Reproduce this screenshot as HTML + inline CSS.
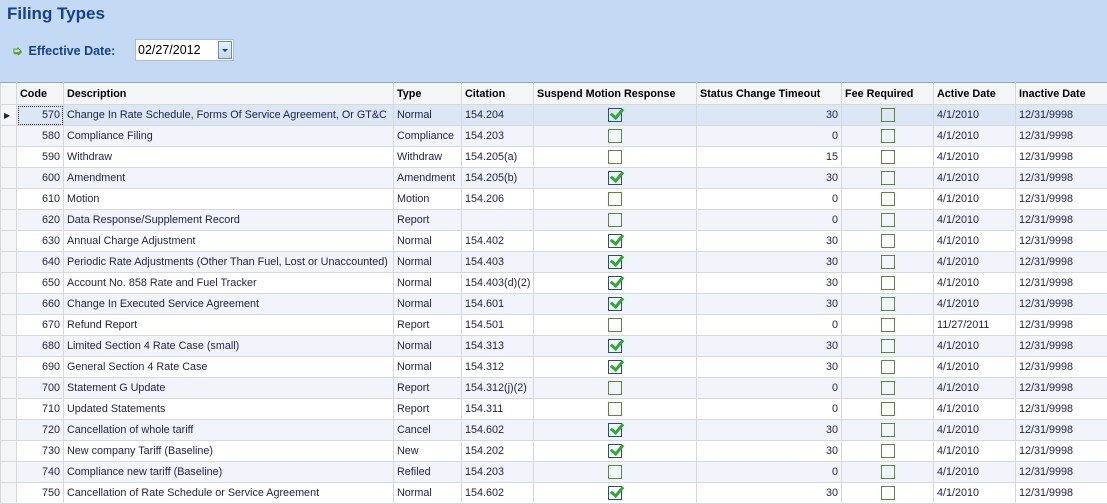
<!DOCTYPE html>
<html><head><style>
*{margin:0;padding:0;box-sizing:border-box}
body{width:1107px;height:504px;overflow:hidden;background:#c4d9f3;font-family:"Liberation Sans",sans-serif;}
.title{position:absolute;left:7px;top:4px;font-size:17px;font-weight:bold;color:#15428b;}
.lbl{position:absolute;left:12px;top:43px;font-size:12.5px;font-weight:bold;color:#15428b;}
.lbl span{color:#5a9e2a;margin-right:6px}
.date{position:absolute;left:135px;top:39px;width:99px;height:22px;background:#fff;border:1px solid #a9bfd6;font-size:12.5px;padding:3px 0 0 2px;color:#000}
.dd{position:absolute;right:1px;top:1px;width:14px;height:18px;border:1px solid #6a8cb8;background:linear-gradient(#e8f0fb,#c4d6ee)}
.dd:after{content:"";position:absolute;left:3px;top:7px;border:3px solid transparent;border-top:3px solid #15428b}
table{position:absolute;left:0;top:82px;border-collapse:collapse;table-layout:fixed;width:1107px;font-size:10.8px;color:#1f1f4f}
td,th{border:1px solid #d5d9de;height:21px;padding:0 3px;white-space:nowrap;overflow:hidden}
th{background:#f4f5f7;color:#000;text-align:left;font-weight:bold;height:22px;border-top:1px solid #9aa7b8}
tr:nth-child(odd) td{background:#f1f5fb}
tr:nth-child(even) td{background:#fff}
tr.sel td{background:#dce6f4}
td.i{background:#f4f5f7!important}
.r{text-align:right}
.c{text-align:center;line-height:0}
.cb{display:inline-block;width:14px;height:14px;border:1px solid #5b8a3c;position:relative;background:transparent}
.ck{border-color:#2b4c7e}
.ck:after{content:"";position:absolute;left:4px;top:-3px;width:5px;height:10px;border:solid #2eaa2e;border-width:0 3px 3px 0;transform:rotate(40deg)}
</style></head><body>
<div class="title">Filing Types</div>
<div class="lbl"><span>➭</span>Effective Date:</div>
<div class="date">02/27/2012<div class="dd"></div></div>
<table>
<colgroup><col style="width:16px"><col style="width:47px"><col style="width:330px"><col style="width:68px"><col style="width:72px"><col style="width:163px"><col style="width:145px"><col style="width:92px"><col style="width:82px"><col style="width:92px"></colgroup>
<tr><th></th><th>Code</th><th>Description</th><th>Type</th><th>Citation</th><th>Suspend Motion Response</th><th>Status Change Timeout</th><th>Fee Required</th><th>Active Date</th><th>Inactive Date</th></tr>
<tr class="sel"><td class="i" style="font-size:8px">▶</td><td class="r" style="outline:1px dotted #333;outline-offset:-2px">570</td><td>Change In Rate Schedule, Forms Of Service Agreement, Or GT&amp;C</td><td>Normal</td><td>154.204</td><td class="c"><span class="cb ck"></span></td><td class="r">30</td><td class="c"><span class="cb"></span></td><td>4/1/2010</td><td>12/31/9998</td></tr>
<tr><td class="i"></td><td class="r">580</td><td>Compliance Filing</td><td>Compliance</td><td>154.203</td><td class="c"><span class="cb"></span></td><td class="r">0</td><td class="c"><span class="cb"></span></td><td>4/1/2010</td><td>12/31/9998</td></tr>
<tr><td class="i"></td><td class="r">590</td><td>Withdraw</td><td>Withdraw</td><td>154.205(a)</td><td class="c"><span class="cb"></span></td><td class="r">15</td><td class="c"><span class="cb"></span></td><td>4/1/2010</td><td>12/31/9998</td></tr>
<tr><td class="i"></td><td class="r">600</td><td>Amendment</td><td>Amendment</td><td>154.205(b)</td><td class="c"><span class="cb ck"></span></td><td class="r">30</td><td class="c"><span class="cb"></span></td><td>4/1/2010</td><td>12/31/9998</td></tr>
<tr><td class="i"></td><td class="r">610</td><td>Motion</td><td>Motion</td><td>154.206</td><td class="c"><span class="cb"></span></td><td class="r">0</td><td class="c"><span class="cb"></span></td><td>4/1/2010</td><td>12/31/9998</td></tr>
<tr><td class="i"></td><td class="r">620</td><td>Data Response/Supplement Record</td><td>Report</td><td></td><td class="c"><span class="cb"></span></td><td class="r">0</td><td class="c"><span class="cb"></span></td><td>4/1/2010</td><td>12/31/9998</td></tr>
<tr><td class="i"></td><td class="r">630</td><td>Annual Charge Adjustment</td><td>Normal</td><td>154.402</td><td class="c"><span class="cb ck"></span></td><td class="r">30</td><td class="c"><span class="cb"></span></td><td>4/1/2010</td><td>12/31/9998</td></tr>
<tr><td class="i"></td><td class="r">640</td><td>Periodic Rate Adjustments (Other Than Fuel, Lost or Unaccounted)</td><td>Normal</td><td>154.403</td><td class="c"><span class="cb ck"></span></td><td class="r">30</td><td class="c"><span class="cb"></span></td><td>4/1/2010</td><td>12/31/9998</td></tr>
<tr><td class="i"></td><td class="r">650</td><td>Account No. 858 Rate and Fuel Tracker</td><td>Normal</td><td>154.403(d)(2)</td><td class="c"><span class="cb ck"></span></td><td class="r">30</td><td class="c"><span class="cb"></span></td><td>4/1/2010</td><td>12/31/9998</td></tr>
<tr><td class="i"></td><td class="r">660</td><td>Change In Executed Service Agreement</td><td>Normal</td><td>154.601</td><td class="c"><span class="cb ck"></span></td><td class="r">30</td><td class="c"><span class="cb"></span></td><td>4/1/2010</td><td>12/31/9998</td></tr>
<tr><td class="i"></td><td class="r">670</td><td>Refund Report</td><td>Report</td><td>154.501</td><td class="c"><span class="cb"></span></td><td class="r">0</td><td class="c"><span class="cb"></span></td><td>11/27/2011</td><td>12/31/9998</td></tr>
<tr><td class="i"></td><td class="r">680</td><td>Limited Section 4 Rate Case (small)</td><td>Normal</td><td>154.313</td><td class="c"><span class="cb ck"></span></td><td class="r">30</td><td class="c"><span class="cb"></span></td><td>4/1/2010</td><td>12/31/9998</td></tr>
<tr><td class="i"></td><td class="r">690</td><td>General Section 4 Rate Case</td><td>Normal</td><td>154.312</td><td class="c"><span class="cb ck"></span></td><td class="r">30</td><td class="c"><span class="cb"></span></td><td>4/1/2010</td><td>12/31/9998</td></tr>
<tr><td class="i"></td><td class="r">700</td><td>Statement G Update</td><td>Report</td><td>154.312(j)(2)</td><td class="c"><span class="cb"></span></td><td class="r">0</td><td class="c"><span class="cb"></span></td><td>4/1/2010</td><td>12/31/9998</td></tr>
<tr><td class="i"></td><td class="r">710</td><td>Updated Statements</td><td>Report</td><td>154.311</td><td class="c"><span class="cb"></span></td><td class="r">0</td><td class="c"><span class="cb"></span></td><td>4/1/2010</td><td>12/31/9998</td></tr>
<tr><td class="i"></td><td class="r">720</td><td>Cancellation of whole tariff</td><td>Cancel</td><td>154.602</td><td class="c"><span class="cb ck"></span></td><td class="r">30</td><td class="c"><span class="cb"></span></td><td>4/1/2010</td><td>12/31/9998</td></tr>
<tr><td class="i"></td><td class="r">730</td><td>New company Tariff (Baseline)</td><td>New</td><td>154.202</td><td class="c"><span class="cb ck"></span></td><td class="r">30</td><td class="c"><span class="cb"></span></td><td>4/1/2010</td><td>12/31/9998</td></tr>
<tr><td class="i"></td><td class="r">740</td><td>Compliance new tariff (Baseline)</td><td>Refiled</td><td>154.203</td><td class="c"><span class="cb"></span></td><td class="r">0</td><td class="c"><span class="cb"></span></td><td>4/1/2010</td><td>12/31/9998</td></tr>
<tr><td class="i"></td><td class="r">750</td><td>Cancellation of Rate Schedule or Service Agreement</td><td>Normal</td><td>154.602</td><td class="c"><span class="cb ck"></span></td><td class="r">30</td><td class="c"><span class="cb"></span></td><td>4/1/2010</td><td>12/31/9998</td></tr>
</table>
</body></html>
